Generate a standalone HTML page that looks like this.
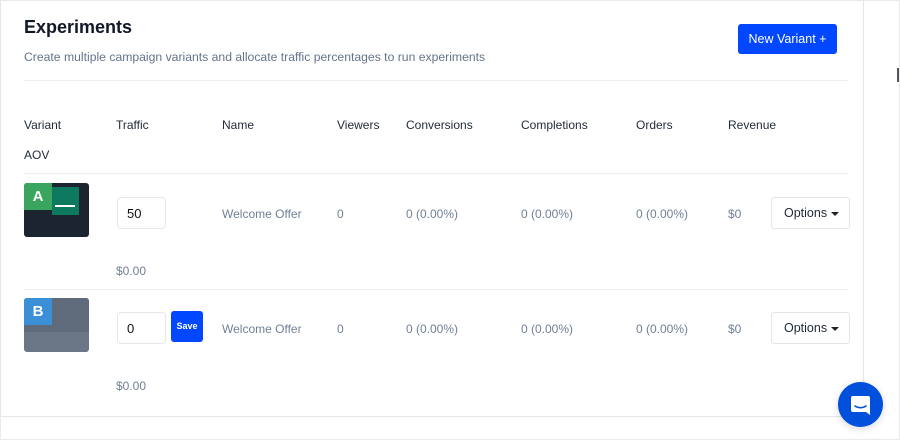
<html><head><style>
body{margin:0;width:900px;height:440px;background:#fff;font-family:"Liberation Sans",sans-serif;position:relative;overflow:hidden}
.a{position:absolute;white-space:nowrap}
.h{font-size:12px;color:#1f2937}
.v{font-size:12px;color:#718096}
.line{position:absolute;height:1px;background:#edf0f3;left:24px;width:824px}
.inp{position:absolute;left:117px;width:49px;height:32px;border:1px solid #e5e7eb;border-radius:4px;box-sizing:border-box;font-size:13px;color:#111;padding:8px 0 0 9px}
.opt{position:absolute;left:771px;width:79px;height:32px;border:1px solid #e2e5ea;border-radius:3px;box-sizing:border-box;font-size:12.5px;color:#1f2937;padding:8px 0 0 12px}
.opt:after{content:"";position:absolute;right:10px;top:14px;border:4px solid transparent;border-top-color:#222;border-bottom:0}
</style></head><body>
<div style="position:absolute;left:0;top:0;width:900px;height:440px;border:1px solid #e8eaed;box-sizing:border-box"></div>
<div style="position:absolute;left:0;top:0;width:864px;height:417px;border:1px solid #e5e7eb;border-top:none;box-sizing:border-box"></div>
<div class="a" style="left:24px;top:17px;font-size:18px;font-weight:bold;color:#111827">Experiments</div>
<div class="a" style="left:24px;top:50px;font-size:12.2px;color:#64748b">Create multiple campaign variants and allocate traffic percentages to run experiments</div>
<div class="a" style="left:738px;top:24px;width:99px;height:30px;background:#0047ff;border-radius:3px;color:#fff;font-size:12.5px;text-align:center;line-height:30px">New Variant +</div>
<div class="line" style="top:80px"></div>
<div class="a h" style="left:24px;top:118px">Variant</div>
<div class="a h" style="left:116px;top:118px">Traffic</div>
<div class="a h" style="left:222px;top:118px">Name</div>
<div class="a h" style="left:337px;top:118px">Viewers</div>
<div class="a h" style="left:406px;top:118px">Conversions</div>
<div class="a h" style="left:521px;top:118px">Completions</div>
<div class="a h" style="left:636px;top:118px">Orders</div>
<div class="a h" style="left:728px;top:118px">Revenue</div>
<div class="a h" style="left:24px;top:148px">AOV</div>
<div class="line" style="top:173px"></div>
<div class="a" style="left:24px;top:183px;width:65px;height:54px;background:#1c2430;border-radius:3px;overflow:hidden">
 <div style="position:absolute;left:28px;top:4px;width:27px;height:28px;background:#0d7a5f"></div>
 <div style="position:absolute;left:31px;top:22px;width:20px;height:2px;background:#fff"></div>
 <div style="position:absolute;left:0;top:0;width:28px;height:27px;background:#3aa55f;color:#fff;font-weight:bold;font-size:15px;text-align:center;line-height:27px">A</div>
</div>
<div class="inp" style="top:197px">50</div>
<div class="a v" style="left:222px;top:207px">Welcome Offer</div>
<div class="a v" style="left:337px;top:207px">0</div>
<div class="a v" style="left:406px;top:207px">0 (0.00%)</div>
<div class="a v" style="left:521px;top:207px">0 (0.00%)</div>
<div class="a v" style="left:636px;top:207px">0 (0.00%)</div>
<div class="a v" style="left:728px;top:207px">$0</div>
<div class="opt" style="top:197px">Options</div>
<div class="a v" style="left:116px;top:264px">$0.00</div>
<div class="line" style="top:289px"></div>
<div class="a" style="left:24px;top:298px;width:65px;height:54px;background:#6b7787;border-radius:3px;overflow:hidden">
 <div style="position:absolute;left:0;top:0;width:65px;height:34px;background:#5f6b7a"></div>
 <div style="position:absolute;left:0;top:0;width:28px;height:27px;background:#3b8fd6;color:#fff;font-weight:bold;font-size:15px;text-align:center;line-height:27px">B</div>
</div>
<div class="inp" style="top:312px">0</div>
<div class="a" style="left:171px;top:311px;width:32px;height:31px;background:#0047ff;border-radius:3px;color:#fff;font-size:9px;font-weight:bold;text-align:center;line-height:31px">Save</div>
<div class="a v" style="left:222px;top:322px">Welcome Offer</div>
<div class="a v" style="left:337px;top:322px">0</div>
<div class="a v" style="left:406px;top:322px">0 (0.00%)</div>
<div class="a v" style="left:521px;top:322px">0 (0.00%)</div>
<div class="a v" style="left:636px;top:322px">0 (0.00%)</div>
<div class="a v" style="left:728px;top:322px">$0</div>
<div class="opt" style="top:312px">Options</div>
<div class="a v" style="left:116px;top:379px">$0.00</div>
<div class="a" style="left:897px;top:68px;width:2px;height:14px;background:#555"></div>
<div class="a" style="left:838px;top:382px;width:45px;height:45px;border-radius:50%;background:#0150dc;box-shadow:0 2px 8px rgba(0,0,0,.15)">
<svg width="45" height="45" viewBox="0 0 45 45"><path d="M15 14h15a2 2 0 0 1 2 2v17l-4-3H15a2 2 0 0 1-2-2V16a2 2 0 0 1 2-2z" fill="#fff"/><path d="M17 24q5.5 3.5 11 0" stroke="#0150dc" stroke-width="1.6" fill="none" stroke-linecap="round"/></svg></div>
</body></html>
